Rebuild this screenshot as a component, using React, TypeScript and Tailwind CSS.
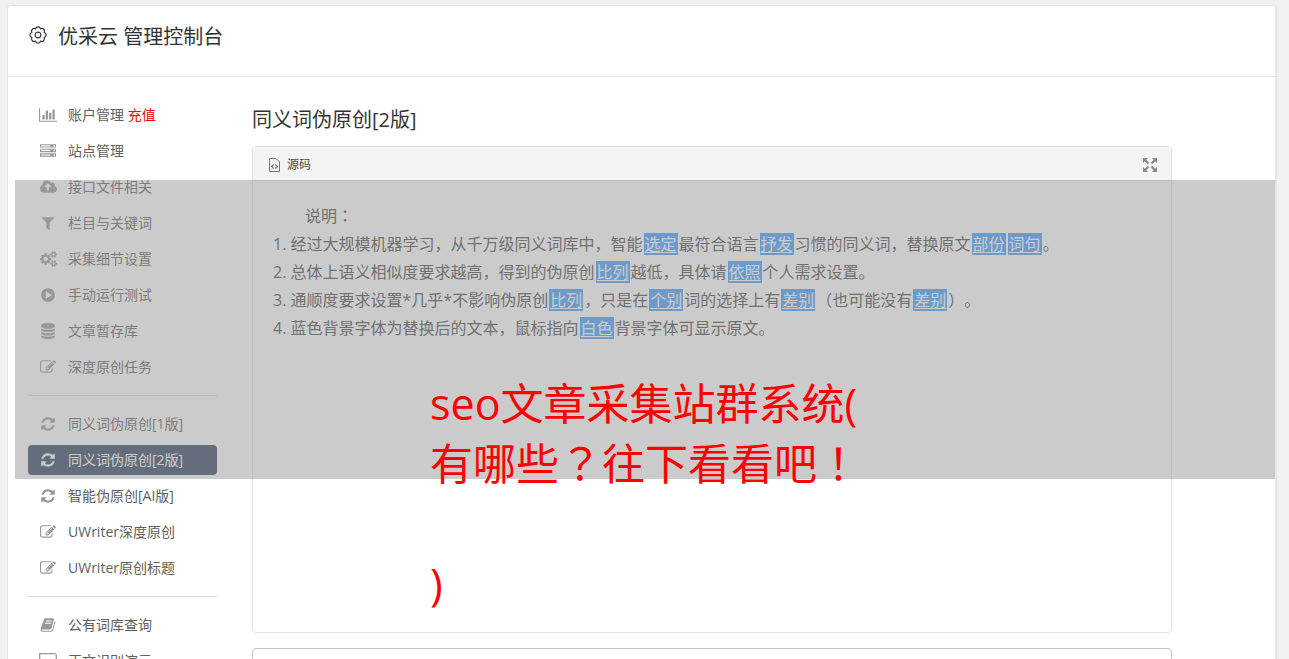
import type { ReactNode } from "react";

type Glyph = { box: string; d: string; w: string };

const glyphs: Record<string, Glyph> = {
  chart: {
    box: "0 0 2048 1792",
    w: "w-[18px]",
    d: "M640 896v512h-256v-512h256zm384-512v1024h-256v-1024h256zm1024 1152v128h-2048v-1536h128v1408h1920zm-640-896v768h-256v-768h256zm384-384v1152h-256v-1152h256z",
  },
  server: {
    box: "0 0 1792 1792",
    w: "w-4",
    d: "M128 1408h1024v-128h-1024v128zm0-512h1024v-128h-1024v128zm1568 448q0-40-28-68t-68-28-68 28-28 68 28 68 68 28 68-28 28-68zm-1568-960h1024v-128h-1024v128zm1568 448q0-40-28-68t-68-28-68 28-28 68 28 68 68 28 68-28 28-68zm0-512q0-40-28-68t-68-28-68 28-28 68 28 68 68 28 68-28 28-68zm96 832v384h-1792v-384h1792zm0-512v384h-1792v-384h1792zm0-512v384h-1792v-384h1792z",
  },
  cloud: {
    box: "0 0 1920 1792",
    w: "w-[17px]",
    d: "M1280 864q0-14-9-23l-352-352q-9-9-23-9t-23 9l-351 351q-10 12-10 24 0 14 9 23t23 9h224v352q0 13 9.500 22.500t22.500 9.500h192q13 0 22.500-9.500t9.500-22.500v-352h224q13 0 22.500-9.500t9.500-22.500zm640 288q0 159-112.500 271.500t-271.500 112.500h-1088q-185 0-316.500-131.500t-131.500-316.500q0-130 70-240t188-165q-2-30-2-43 0-212 150-362t362-150q156 0 285.500 87t188.500 231q71-62 166-62 106 0 181 75t75 181q0 76-41 138 130 31 213.500 135.500t83.500 238.500z",
  },
  filter: {
    box: "0 0 1792 1792",
    w: "w-4",
    d: "M1595 295q17 41-14 70l-493 493v742q0 42-39 59-13 5-25 5-27 0-45-19l-256-256q-19-18-19-45v-486l-493-493q-31-29-14-70 17-39 59-39h1280q42 0 59 39z",
  },
  cogs: {
    box: "0 0 1920 1792",
    w: "w-[17px]",
    d: "M896 896q0-106-75-181t-181-75-181 75-75 181 75 181 181 75 181-75 75-181zm768 512q0-52-38-90t-90-38-90 38-38 90q0 53 37.500 90.500t90.500 37.500 90.500-37.500 37.500-90.500zm0-1024q0-52-38-90t-90-38-90 38-38 90q0 53 37.500 90.500t90.500 37.500 90.500-37.500 37.500-90.500zm-384 421v185q0 10-7 19.500t-16 10.500l-155 24q-11 35-32 76 34 48 90 115 7 11 7 20 0 12-7 19-23 30-82.500 89.500t-78.500 59.500q-11 0-21-7l-115-90q-37 19-77 31-11 108-23 155-7 24-30 24h-186q-11 0-20-7.500t-10-17.500l-23-153q-34-10-75-31l-118 89q-7 7-20 7-11 0-21-8-144-133-144-160 0-9 7-19 10-14 41-53t47-61q-23-44-35-82l-152-24q-10-1-17-9.500t-7-19.500v-185q0-10 7-19.500t16-10.500l155-24q11-35 32-76-34-48-90-115-7-11-7-20 0-12 7-20 22-30 82-89t79-59q11 0 21 7l115 90q34-18 77-32 11-108 23-154 7-24 30-24h186q11 0 20 7.500t10 17.500l23 153q34 10 75 31l118-89q8-7 20-7 11 0 21 8 144 133 144 160 0 8-7 19-12 16-42 54t-45 60q23 48 34 82l152 23q10 2 17 10.500t7 19.500zm640 533v140q0 16-149 31-12 27-30 52 51 113 51 138 0 4-4 7-122 71-124 71-8 0-46-47t-52-68q-20 2-30 2t-30-2q-14 21-52 68t-46 47q-2 0-124-71-4-3-4-7 0-25 51-138-18-25-30-52-149-15-149-31v-140q0-16 149-31 13-29 30-52-51-113-51-138 0-4 4-7 4-2 35-20t59-34 30-16q8 0 46 46.500t52 67.500q20-2 30-2t30 2q51-71 92-112l6-2q4 0 124 70 4 3 4 7 0 25-51 138 17 23 30 52 149 15 149 31zm0-1024v140q0 16-149 31-12 27-30 52 51 113 51 138 0 4-4 7-122 71-124 71-8 0-46-47t-52-68q-20 2-30 2t-30-2q-14 21-52 68t-46 47q-2 0-124-71-4-3-4-7 0-25 51-138-18-25-30-52-149-15-149-31v-140q0-16 149-31 13-29 30-52-51-113-51-138 0-4 4-7 4-2 35-20t59-34 30-16q8 0 46 46.500t52 67.500q20-2 30-2t30 2q51-71 92-112l6-2q4 0 124 70 4 3 4 7 0 25-51 138 17 23 30 52 149 15 149 31z",
  },
  play: {
    box: "0 0 1792 1792",
    w: "w-4",
    d: "M896 128q209 0 385.500 103t279.500 279.500 103 385.500-103 385.500-279.500 279.500-385.500 103-385.500-103-279.500-279.500-103-385.500 103-385.500 279.500-279.500 385.500-103zm384 823q32-18 32-55t-32-55l-544-320q-31-19-64-1-32 19-32 56v640q0 37 32 56 16 8 32 8 17 0 32-9z",
  },
  database: {
    box: "0 0 1792 1792",
    w: "w-4",
    d: "M896 768q237 0 443-43t325-127v170q0 69-103 128t-280 93.500-385 34.500-385-34.500-280-93.500-103-128v-170q119 84 325 127t443 43zm0 768q237 0 443-43t325-127v170q0 69-103 128t-280 93.500-385 34.500-385-34.500-280-93.500-103-128v-170q119 84 325 127t443 43zm0-384q237 0 443-43t325-127v170q0 69-103 128t-280 93.500-385 34.500-385-34.500-280-93.500-103-128v-170q119 84 325 127t443 43zm0-1152q208 0 385 34.500t280 93.500 103 128v128q0 69-103 128t-280 93.500-385 34.500-385-34.500-280-93.500-103-128v-128q0-69 103-128t280-93.500 385-34.500z",
  },
  edit: {
    box: "0 0 1792 1792",
    w: "w-4",
    d: "M888 1184l116-116-152-152-116 116v56h96v96h56zm440-720q-16-16-33 1l-350 350q-17 17-1 33t33-1l350-350q17-17 1-33zm80 594v190q0 119-84.500 203.500t-203.500 84.500h-832q-119 0-203.500-84.500t-84.500-203.500v-832q0-119 84.500-203.500t203.500-84.500h832q63 0 117 25 15 7 18 23 3 17-9 29l-49 49q-14 14-32 8-23-6-45-6h-832q-66 0-113 47t-47 113v832q0 66 47 113t113 47h832q66 0 113-47t47-113v-126q0-13 9-22l64-64q15-15 35-7t20 29zm-96-738l288 288-672 672h-288v-288zm444 132l-92 92-288-288 92-92q28-28 68-28t68 28l152 152q28 28 28 68t-28 68z",
  },
  refresh: {
    box: "0 0 1792 1792",
    w: "w-4",
    d: "M1639 1056q0 5-1 7-64 268-268 434.500t-478 166.500q-146 0-282.500-55t-243.500-157l-129 129q-19 19-45 19t-45-19-19-45v-448q0-26 19-45t45-19h448q26 0 45 19t19 45-19 45l-137 137q71 66 161 102t187 36q134 0 250-65t186-179q11-17 53-117 8-23 30-23h192q13 0 22.500 9.500t9.500 22.500zm25-800v448q0 26-19 45t-45 19h-448q-26 0-45-19t-19-45 19-45l138-138q-148-137-349-137-134 0-250 65t-186 179q-11 17-53 117-8 23-30 23h-199q-13 0-22.500-9.500t-9.500-22.500v-7q65-268 270-434.500t480-166.500q146 0 284 55.500t245 156.500l130-129q19-19 45-19t45 19 19 45z",
  },
  book: {
    box: "0 0 1792 1792",
    w: "w-4",
    d: "M1703 478q40 57 18 129l-275 906q-19 64-76.500 107.500t-122.500 43.500h-923q-77 0-148.500-53.500t-99.500-131.500q-24-67-2-127 0-4 3-27t4-37q1-8-3-21.500t-3-19.500q2-11 8-21t16.500-23.500 16.500-23.500q23-38 45-91.500t30-91.500q3-10 .5-30t-.5-28q3-11 17-28t17-23q21-36 42-92t25-90q1-9-2.500-32t.5-28q4-13 22-30.500t22-22.500q19-26 42.500-84.500t27.500-96.500q1-8-3-25.500t-2-26.500q2-8 9-18t18-23 17-21q8-12 16.500-30.500t15-35 16-36 19.500-32 26.500-23.500 36-11.500 47.500 5.500l-1 3q38-9 51-9h761q74 0 114 56t18 130l-274 906q-36 119-71.500 153.500t-128.500 34.500h-869q-27 0-38 15-11 16-1 43 24 70 144 70h923q29 0 56-15.500t35-41.500l300-987q7-22 5-57 38 15 59 43zm-1064 2q-4 13 2 22.500t20 9.500h608q13 0 25.500-9.500t16.500-22.500l21-64q4-13-2-22.500t-20-9.500h-608q-13 0-25.500 9.500t-16.500 22.500zm-83 256q-4 13 2 22.500t20 9.500h608q13 0 25.500-9.500t16.500-22.500l21-64q4-13-2-22.500t-20-9.500h-608q-13 0-25.500 9.500t-16.500 22.500z",
  },
  desktop: {
    box: "0 0 1856 1664",
    w: "w-[18px]",
    d: "M1728 992v-832q0-13-9.500-22.500t-22.500-9.500h-1536q-13 0-22.500 9.500t-9.500 22.500v832q0 13 9.500 22.500t22.500 9.500h1536q13 0 22.500-9.500t9.500-22.500zm128-832v1088q0 66-47 113t-113 47h-544q0 37 16 77.500t32 71 16 43.500q0 26-19 45t-45 19h-512q-26 0-45-19t-19-45q0-14 16-44t32-70 16-78h-544q-66 0-113-47t-47-113v-1088q0-66 47-113t113-47h1536q66 0 113 47t47 113z",
  },
};

function Icon({ name }: { name: string }) {
  const g = glyphs[name];
  return (
    <svg viewBox={g.box} className={`h-4 shrink-0 ${g.w}`} fill="currentColor" aria-hidden="true">
      <path d={g.d} />
    </svg>
  );
}

type Item = { icon: string; label: string; extra?: string; active?: boolean };

const groups: Item[][] = [
  [
    { icon: "chart", label: "账户管理", extra: "充值" },
    { icon: "server", label: "站点管理" },
    { icon: "cloud", label: "接口文件相关" },
    { icon: "filter", label: "栏目与关键词" },
    { icon: "cogs", label: "采集细节设置" },
    { icon: "play", label: "手动运行测试" },
    { icon: "database", label: "文章暂存库" },
    { icon: "edit", label: "深度原创任务" },
  ],
  [
    { icon: "refresh", label: "同义词伪原创[1版]" },
    { icon: "refresh", label: "同义词伪原创[2版]", active: true },
    { icon: "refresh", label: "智能伪原创[AI版]" },
    { icon: "edit", label: "UWriter深度原创" },
    { icon: "edit", label: "UWriter原创标题" },
  ],
  [
    { icon: "book", label: "公有词库查询" },
    { icon: "desktop", label: "正文识别演示" },
  ],
];

function NavLink({ item }: { item: Item }) {
  return (
    <a
      href="#"
      className={
        item.active
          ? "flex h-[30px] items-center rounded bg-[#30435f] text-white"
          : "flex h-[30px] items-center rounded text-[#606060]"
      }
    >
      <span className={item.active ? "flex w-10 justify-center" : "flex w-10 justify-center text-[#999]"}>
        <Icon name={item.icon} />
      </span>
      <span>
        {item.label}
        {item.extra && <span className="text-[#f00]"> {item.extra}</span>}
      </span>
    </a>
  );
}

function Swap({ children }: { children: ReactNode }) {
  return <span className="mx-px bg-[#409eff] px-px text-white underline underline-offset-2">{children}</span>;
}

// Full-width marks centred in their cell
function Mark({ children }: { children: ReactNode }) {
  return (
    <span lang="zh-TW" className="font-['Noto_Sans_CJK_TC',sans-serif] leading-none">
      {children}
    </span>
  );
}

export default function App() {
  return (
    <div
      lang="zh-CN"
      className="h-screen overflow-hidden bg-[#f1f1f1] pt-[5px] pr-3 pl-[7px] font-['Open_Sans','Noto_Sans_CJK_SC',sans-serif] text-sm text-[#333] [text-spacing-trim:space-all]"
    >
      <div className="relative h-full rounded-t border border-r-2 border-b-0 border-[#e5e5e5] bg-white">
        <header className="flex h-[71px] items-start gap-2.5 border-b border-[#e5e5e5] px-5 pt-[17px]">
          <svg viewBox="-10 -10 20 20" className="mt-0.5 size-5" fill="none" stroke="#333" strokeWidth="1.2" strokeLinejoin="round" aria-hidden="true">
            <path d="M-2.530-6.100A2.600 2.600 0 0 1 2.530-6.100A2.600 2.600 0 0 1 6.100-2.530A2.600 2.600 0 0 1 6.100 2.530A2.600 2.600 0 0 1 2.530 6.100A2.600 2.600 0 0 1-2.530 6.100A2.600 2.600 0 0 1-6.100 2.530A2.600 2.600 0 0 1-6.100-2.530A2.600 2.600 0 0 1-2.530-6.100Z" />
            <circle r="2.900" />
          </svg>
          <h1 className="text-xl leading-[28px]">优采云 管理控制台</h1>
        </header>

        <div className="flex">
          <nav className="ml-5 w-[189px] shrink-0 pt-[23px]">
            {groups.map((group, i) => (
              <ul
                key={i}
                className={
                  i > 0
                    ? "mt-[13px] flex flex-col gap-1.5 border-t border-[#ddd] pt-[13px]"
                    : "flex flex-col gap-1.5"
                }
              >
                {group.map((item) => (
                  <li key={item.label}>
                    <NavLink item={item} />
                  </li>
                ))}
              </ul>
            ))}
          </nav>

          <main className="mr-[103px] ml-[35px] min-w-0 flex-1 pt-[29px]">
            <h2 className="text-xl leading-[28px]">同义词伪原创[2版]</h2>
            <section className="mt-3 rounded border border-[#e2e2e2]">
              <div className="flex h-[34px] items-center justify-between border-b border-[#ddd] bg-[#f4f4f4] px-[13px] pt-[3px]">
                <button type="button" className="flex items-center gap-[5px] text-xs text-[#484848]">
                  <svg viewBox="0 0 16 16" className="size-4" fill="none" stroke="#777" aria-hidden="true">
                    <path d="M3.500 1.500h6.500l3.500 3.500v9.500h-10z" />
                    <path d="M7.600 7.500 5.700 9.500l1.900 2M9.400 7.500l1.900 2-1.900 2" strokeWidth="1.300" />
                  </svg>
                  源码
                </button>
                <button type="button" aria-label="全屏">
                  <svg viewBox="0 0 16 16" className="size-4" fill="#888" stroke="#888" strokeWidth="2" aria-hidden="true">
                    <path stroke="none" d="M1 1h5L1 6zM15 1v5l-5-5zM1 15v-5l5 5zM15 15h-5l5-5z" />
                    <path d="M3 3l3.500 3.500M13 3 9.500 6.500M3 13l3.500-3.500M13 13 9.500 9.500" />
                  </svg>
                </button>
              </div>
              <div className="h-[451px] px-5 pt-[21px] text-base leading-[28px] text-[#484848]">
                <p className="pl-8">
                  说明<Mark>：</Mark>
                </p>
                <ol className="list-inside list-decimal">
                  <li>
                    经过大规模机器学习，从千万级同义词库中，智能<Swap>选定</Swap>最符合语言<Swap>抒发</Swap>
                    习惯的同义词，替换原文<Swap>部份</Swap><Swap>词句</Swap>。
                  </li>
                  <li>
                    总体上语义相似度要求越高，得到的伪原创<Swap>比列</Swap>越低，具体请<Swap>依照</Swap>个人需求设置。
                  </li>
                  <li>
                    通顺度要求设置*几乎*不影响伪原创<Swap>比列</Swap>，只是在<Swap>个别</Swap>词的选择上有
                    <Swap>差别</Swap>（也可能没有<Swap>差别</Swap>）。
                  </li>
                  <li>
                    蓝色背景字体为替换后的文本，鼠标指向<Swap>白色</Swap>背景字体可显示原文。
                  </li>
                </ol>
              </div>
            </section>
            <section className="mt-[15px] h-20 rounded border border-[#c4c4c4]" />
          </main>
        </div>

        <div className="absolute top-[174px] right-0 left-[7px] h-[299px] bg-[#979797]/50">
          <p className="pt-[194px] pl-[415px] text-[43px] leading-[60px] text-[#f00]">
            seo文章采集站群系统(
            <br />
            有哪些<Mark>？</Mark>往下看看吧<Mark>！</Mark>
            <br />
            <br />)
          </p>
        </div>
      </div>
    </div>
  );
}
